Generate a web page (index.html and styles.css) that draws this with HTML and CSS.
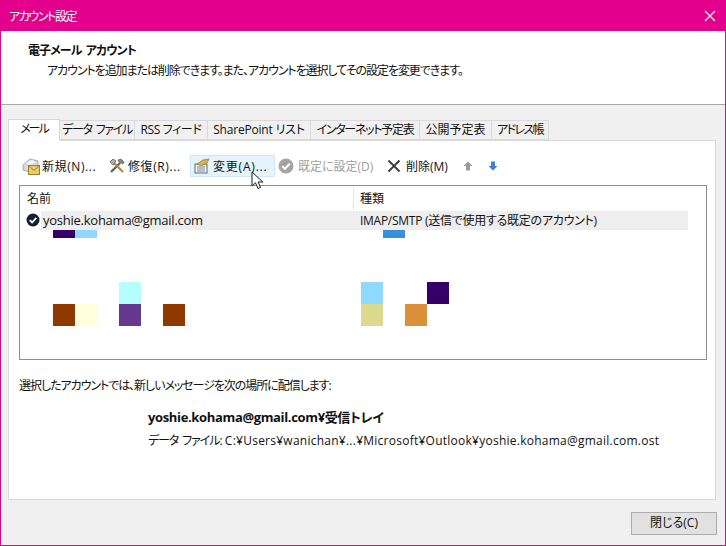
FILE: index.html
```html
<!DOCTYPE html>
<html lang="ja">
<head>
    <meta charset="UTF-8">
    <title>アカウント設定</title>
    <link rel="stylesheet" href="styles.css">
</head>
<body>
<div class="window">
    <div class="titlebar">
        <span class="title">アカウント設定</span>
        <svg class="close" width="12" height="12" viewBox="0 0 12 12"><path d="M1 1l10 10M11 1L1 11" stroke="#fff" stroke-width="1.1" fill="none"/></svg>
    </div>
    <div class="header">
        <h1>電子メール アカウント</h1>
        <p>アカウントを追加または削除できます。また、アカウントを選択してその設定を変更できます。</p>
    </div>
    <div class="body">
        <div class="tabs">
            <div class="tab active">メール</div>
            <div class="tab t-data">データ ファイル</div>
            <div class="tab t-rss">RSS フィード</div>
            <div class="tab t-sp">SharePoint リスト</div>
            <div class="tab t-net">インターネット予定表</div>
            <div class="tab t-pub">公開予定表</div>
            <div class="tab t-addr">アドレス帳</div>
        </div>
        <div class="panel">
            <div class="toolbar">
                <div class="tool t-new">
                    <svg width="18" height="18" viewBox="0 0 18 18"><path d="M1 8l7-6 8 2v5l-8 6-7-2z" fill="#d5dadd" stroke="#a5adb2"/><path d="M4 6l6-3 4 2-6 3z" fill="#f2f4f5"/><rect x="6.500" y="8.500" width="11" height="9" fill="#eccb6a" stroke="#a08030"/><path d="M6.500 8.500l5.500 5 5.500-5" fill="none" stroke="#a08030"/></svg>
                    <span>新規(N)...</span>
                </div>
                <div class="tool t-fix">
                    <svg width="18" height="18" viewBox="0 0 18 18"><path d="M3 15L12 6" stroke="#5c6670" stroke-width="2.400"/><path d="M10 3l3-1 3 3-1 2-2-1-2-1z" fill="#7d8892" stroke="#3f474e" stroke-width=".6"/><path d="M15 15L6 6" stroke="#b58a3c" stroke-width="2.200"/><path d="M2 5l3-3 3 2-3 4z" fill="#aab2b8" stroke="#4a5158" stroke-width=".7"/></svg>
                    <span>修復(R)...</span>
                </div>
                <div class="tool t-edit hover">
                    <svg width="18" height="18" viewBox="0 0 18 18"><rect x="2" y="7" width="12" height="9" fill="#f4f6f8" stroke="#5f6b76"/><path d="M4 10h8M4 12h8M4 14h8" stroke="#7a8894"/><path d="M4 7l6-4 6-1-2 4-6 3z" fill="#d9b24c" stroke="#8d7228" stroke-width=".7"/></svg>
                    <span>変更(A)...</span>
                </div>
                <div class="tool t-default disabled">
                    <svg width="16" height="16" viewBox="0 0 16 16"><circle cx="8" cy="8" r="7.500" fill="#a4a4a4"/><path d="M4.300 8.200l2.600 2.600 4.800-5" fill="none" stroke="#fff" stroke-width="2"/></svg>
                    <span>既定に設定(D)</span>
                </div>
                <div class="tool t-del">
                    <svg width="14" height="14" viewBox="0 0 14 14"><path d="M1.500 1.500l11 11M12.500 1.500l-11 11" stroke="#3a3a3a" stroke-width="1.800" fill="none"/></svg>
                    <span>削除(M)</span>
                </div>
                <svg class="arrow-up" width="10" height="10" viewBox="0 0 10 10"><path d="M5 .5L9.500 5H7v4.500H3V5H.5z" fill="#9a9a9a"/></svg>
                <svg class="arrow-down" width="10" height="10" viewBox="0 0 10 10"><path d="M5 9.500L.5 5H3V.5h4V5h2.500z" fill="#3f7fd6"/></svg>
                <svg class="cursor" width="14" height="19" viewBox="0 0 14 19"><path d="M1 1v14l3.500-3.200 2.500 5.700 2.500-1.100-2.400-5.400h4.700z" fill="#fff" stroke="#1a1a1a" stroke-width="1"/></svg>
            </div>
            <div class="list">
                <div class="list-head">
                    <div class="col-name">名前</div>
                    <div class="col-type">種類</div>
                </div>
                <div class="list-row">
                    <svg class="row-check" width="14" height="14" viewBox="0 0 14 14"><circle cx="7" cy="7" r="6.500" fill="#10202e"/><path d="M3.800 7.200l2.300 2.300 4.200-4.600" fill="none" stroke="#fff" stroke-width="1.800"/></svg>
                    <div class="row-bg">
                        <div class="row-name">yoshie.kohama@gmail.com</div>
                        <div class="row-type">IMAP/SMTP (送信で使用する既定のアカウント)</div>
                    </div>
                </div>
                <div class="blocks">
                    <i class="b b1"></i><i class="b b2"></i><i class="b b3"></i>
                    <i class="b b4"></i><i class="b b5"></i><i class="b b6"></i>
                    <i class="b b7"></i><i class="b b8"></i><i class="b b9"></i>
                    <i class="b b10"></i><i class="b b11"></i><i class="b b12"></i>
                </div>
            </div>
            <p class="note">選択したアカウントでは、新しいメッセージを次の場所に配信します:</p>
            <div class="delivery">
                <div class="folder">yoshie.kohama@gmail.com¥受信トレイ</div>
                <div class="datafile"><span class="file-label">データ ファイル:</span> C:¥Users¥wanichan¥...¥Microsoft¥Outlook¥yoshie.kohama@gmail.com.ost</div>
            </div>
        </div>
        <div class="footer">
            <div class="button">閉じる(C)</div>
        </div>
    </div>
</div>
</body>
</html>
```

FILE: styles.css
```css
body {
    margin: 0;
    padding: 0;
    font-family: "Open Sans", "Noto Sans CJK JP", sans-serif;
    font-size: 12px;
    font-feature-settings: "palt";
    color: #111;
}
.window {
    width: 726px;
    height: 546px;
    box-sizing: border-box;
    border: 1px solid #e3008c;
    border-top: 0;
    display: flex;
    flex-direction: column;
    overflow: hidden;
    background-color: #f0f0f0;
}
.titlebar {
    height: 31px;
    background-color: #e3008c;
    color: #fff;
    display: flex;
    align-items: center;
    justify-content: space-between;
    padding: 0 8px;
    flex-shrink: 0;
}
.title {
    letter-spacing: -1.4px;
}
.close {
    margin-right: 1px;
}
.header {
    height: 74px;
    background-color: #fff;
    border-bottom: 1px solid #a8a8a8;
    box-sizing: border-box;
    padding: 11px 0 0 27px;
    flex-shrink: 0;
}
.header h1 {
    margin: 0;
    font-size: 12px;
    line-height: 17px;
    font-weight: 700;
    letter-spacing: -0.9px;
    word-spacing: 2px;
}
.header p {
    margin: 3px 0 0 19px;
    line-height: 17px;
    letter-spacing: -1.07px;
}
.body {
    flex: 1;
    padding: 14px 9px 0 7px;
    display: flex;
    flex-direction: column;
}
.tabs {
    display: flex;
    height: 21px;
    position: relative;
    z-index: 1;
    padding-top: 1px;
    box-sizing: border-box;
}
.tab {
    height: 20px;
    box-sizing: border-box;
    border: 1px solid #d9d9d9;
    border-left: 0;
    background-color: #f0f0f0;
    text-align: center;
    line-height: 18px;
    white-space: nowrap;
}
.tab.active {
    width: 52px;
    height: 22px;
    margin-top: -1px;
    background-color: #fff;
    border-left: 1px solid #d9d9d9;
    border-bottom: 0;
    letter-spacing: -2px;
}
.t-data { width: 75px; letter-spacing: -1.3px; word-spacing: 2px; }
.t-rss { width: 73px; letter-spacing: -0.4px; }
.t-sp { width: 103px; letter-spacing: -0.2px; }
.t-net { width: 109px; letter-spacing: -1.3px; }
.t-pub { width: 72px; }
.t-addr { width: 57px; letter-spacing: -1.6px; }
.panel {
    height: 360px;
    box-sizing: border-box;
    background-color: #fff;
    border: 1px solid #d9d9d9;
    padding: 0 8px 0 10px;
    position: relative;
}
.toolbar {
    height: 44px;
    box-sizing: border-box;
    padding-top: 14px;
    display: flex;
    align-items: flex-start;
    position: relative;
}
.tool {
    height: 22px;
    display: flex;
    align-items: center;
    gap: 2px;
    white-space: nowrap;
    box-sizing: border-box;
    padding-left: 3px;
    flex-shrink: 0;
}
.t-new { width: 86px; letter-spacing: 0.6px; }
.t-fix { width: 85px; letter-spacing: 0.6px; }
.t-edit { width: 85px; letter-spacing: 0.8px; }
.t-default { width: 109px; gap: 4px; }
.t-del { width: 79px; gap: 5px; }
.hover {
    background-color: #e5f3ff;
    border: 1px solid #cce8ff;
    padding-left: 2px;
}
.disabled {
    color: #a0a0a0;
}
.arrow-up {
    margin: 6px 15px 0 0;
}
.arrow-down {
    margin-top: 6px;
}
.cursor {
    position: absolute;
    left: 232px;
    top: 30px;
    z-index: 2;
}
.list {
    height: 175px;
    box-sizing: border-box;
    border: 1px solid #8e8e94;
    position: relative;
}
.list-head {
    height: 24px;
    display: flex;
    align-items: center;
    padding-top: 1px;
    box-sizing: border-box;
}
.col-name {
    width: 334px;
    box-sizing: border-box;
    padding-left: 7px;
    height: 100%;
    line-height: 24px;
    border-right: 1px solid #e5e5e5;
}
.col-type {
    padding-left: 6px;
    line-height: 24px;
}
.list-row {
    height: 20px;
    display: flex;
    align-items: center;
    position: relative;
}
.row-check {
    margin-left: 6px;
    margin-right: 1px;
    flex-shrink: 0;
}
.row-bg {
    width: 647px;
    height: 19px;
    background-color: #eeeeee;
    display: flex;
    align-items: center;
}
.row-name {
    width: 319px;
    box-sizing: border-box;
    padding-left: 2px;
    font-size: 13px;
    letter-spacing: -0.25px;
}
.row-type {
    letter-spacing: -0.27px;
}
.note {
    margin: 17px 0 0 0;
    line-height: 17px;
    letter-spacing: -1.05px;
}
.delivery {
    margin: 14px 0 0 129px;
}
.folder {
    font-weight: 700;
    line-height: 18px;
    font-size: 13px;
    letter-spacing: -0.35px;
}
.datafile {
    margin-top: 6px;
    line-height: 17px;
    white-space: nowrap;
    letter-spacing: 0.25px;
}
.file-label {
    letter-spacing: -1.1px;
    word-spacing: 2px;
}
.footer {
    flex: 1;
    display: flex;
    justify-content: flex-end;
    align-items: flex-start;
    padding-top: 12px;
    margin-right: -1px;
}
.button {
    width: 86px;
    height: 23px;
    box-sizing: border-box;
    background-color: #e1e1e1;
    border: 1px solid #adadad;
    text-align: center;
    line-height: 20px;
}
/* stray colour blocks drawn over the list */
.blocks {
    position: absolute;
    top: 0;
    left: 0;
}
.b {
    position: absolute;
    width: 22px;
    height: 22px;
}
.b1 { left: 33px; top: 44px; height: 8px; background-color: #350068; }
.b2 { left: 55px; top: 44px; height: 8px; background-color: #8fd8ff; }
.b3 { left: 363px; top: 44px; height: 8px; background-color: #398fdb; }
.b4 { left: 99px; top: 96px; background-color: #b5ffff; }
.b5 { left: 341px; top: 96px; background-color: #8fd8ff; }
.b6 { left: 407px; top: 96px; background-color: #350068; }
.b7 { left: 33px; top: 118px; background-color: #8f3900; }
.b8 { left: 55px; top: 118px; background-color: #ffffdb; }
.b9 { left: 99px; top: 118px; background-color: #65398f; }
.b10 { left: 143px; top: 118px; background-color: #8f3900; }
.b11 { left: 341px; top: 118px; background-color: #dbdb8f; }
.b12 { left: 385px; top: 118px; background-color: #db8f39; }
```
